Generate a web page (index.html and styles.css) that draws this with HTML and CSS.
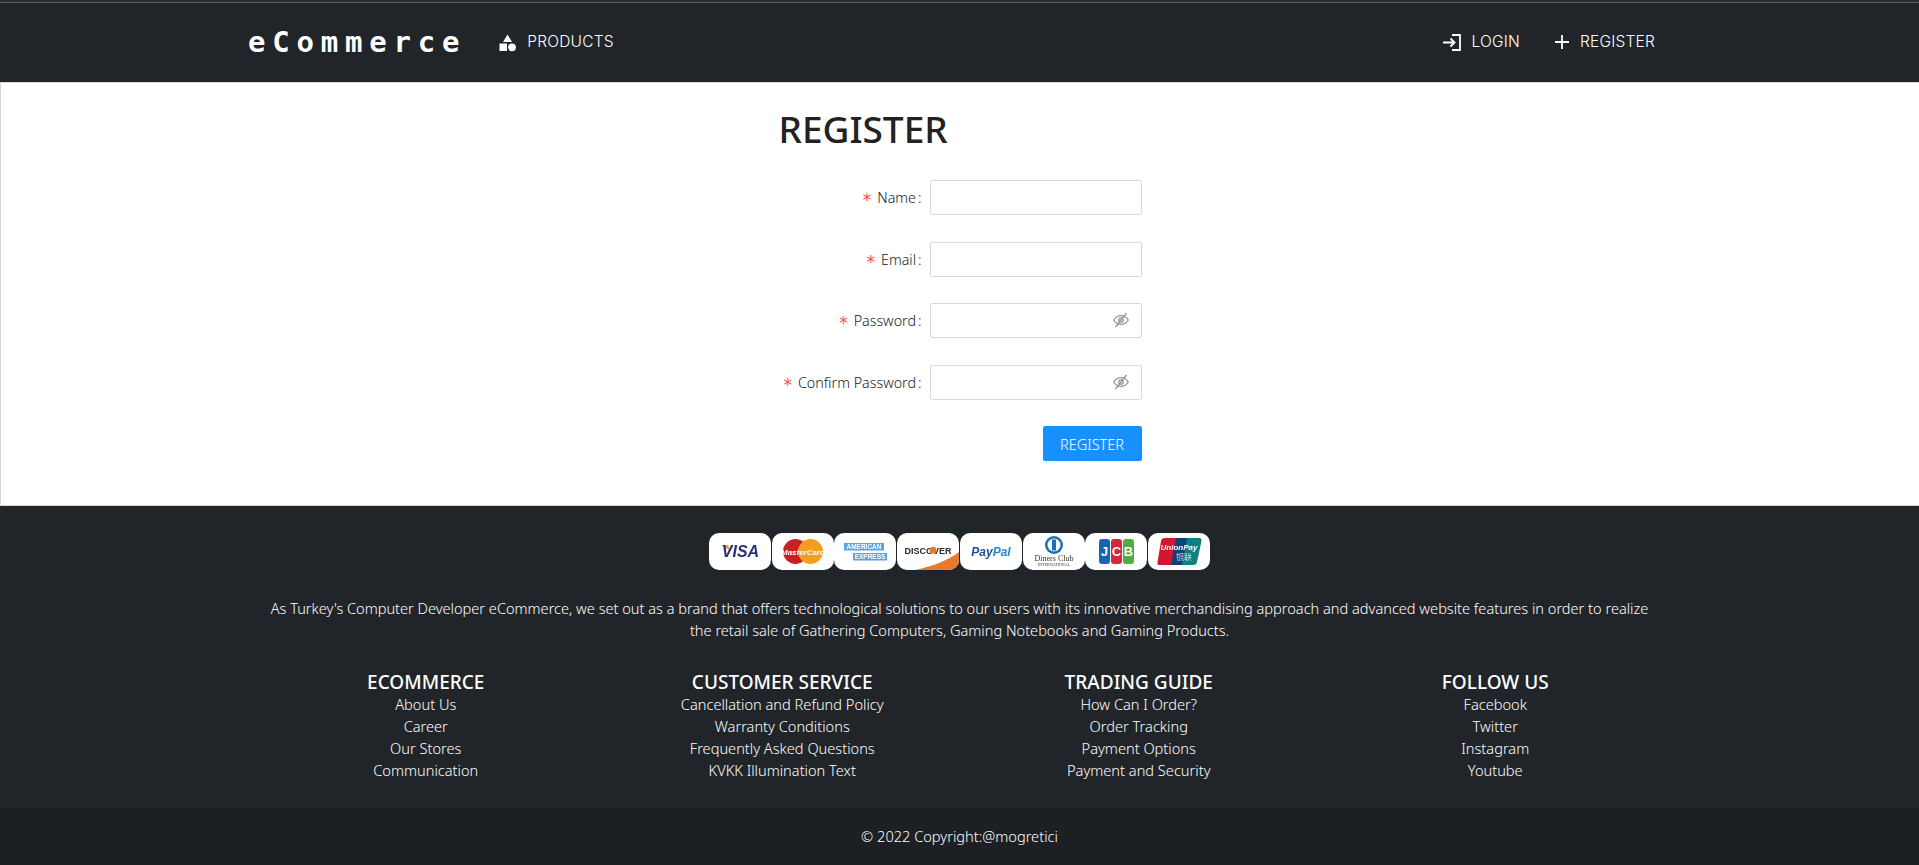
FILE: index.html
```html
<!DOCTYPE html>
<html lang="en">
  <head>
    <meta charset="UTF-8" />
    <title>eCommerce Register</title>
    <link rel="stylesheet" href="styles.css">
  </head>
  <body>
    <nav class="navbar">
      <a class="brand" href="#">eCommerce</a>
      <a class="nav-link" href="#">
        <svg class="nav-icon" width="19" height="19" viewBox="0 0 19 19"><path d="M9.500 1.500 14 9H5z" fill="#fff"/><rect x="1.500" y="10.500" width="7.500" height="7.500" fill="#fff"/><circle cx="14" cy="14.300" r="3.900" fill="#fff"/></svg>
        PRODUCTS
      </a>
      <div class="nav-right">
        <a class="nav-link" href="#">
          <svg class="nav-icon" width="20" height="19" viewBox="0 0 20 19" fill="none" stroke="#fff" stroke-width="1.800"><path d="M1 9.500h11M8.500 5.500l4 4-4 4"/><path d="M10 2h8v15h-8"/></svg>
          LOGIN
        </a>
        <a class="nav-link" href="#">
          <svg class="nav-icon plus" width="14" height="14" viewBox="0 0 14 14" fill="none" stroke="#fff" stroke-width="1.800"><path d="M7 0v14M0 7h14"/></svg>
          REGISTER
        </a>
      </div>
    </nav>

    <main class="register-page">
      <div class="register-box">
        <h1>REGISTER</h1>
        <form class="register-form">
          <label class="req">Name<span class="colon">:</span></label>
          <div class="field"><input type="text" /></div>
          <label class="req">Email<span class="colon">:</span></label>
          <div class="field"><input type="email" /></div>
          <label class="req">Password<span class="colon">:</span></label>
          <div class="field">
            <input type="password" />
            <svg class="eye" width="16" height="16" viewBox="0 0 16 16" fill="none" stroke="#959595" stroke-width="1.300"><path d="M.7 8C2.500 5 5 3.600 8 3.600S13.500 5 15.300 8C13.500 11 11 12.400 8 12.400S2.500 11 .7 8z"/><circle cx="8" cy="8" r="2.200"/><path d="M13.500 1 2.500 15"/></svg>
          </div>
          <label class="req">Confirm Password<span class="colon">:</span></label>
          <div class="field">
            <input type="password" />
            <svg class="eye" width="16" height="16" viewBox="0 0 16 16" fill="none" stroke="#959595" stroke-width="1.300"><path d="M.7 8C2.500 5 5 3.600 8 3.600S13.500 5 15.300 8C13.500 11 11 12.400 8 12.400S2.500 11 .7 8z"/><circle cx="8" cy="8" r="2.200"/><path d="M13.500 1 2.500 15"/></svg>
          </div>
          <div class="actions"><button type="button">REGISTER</button></div>
        </form>
      </div>
    </main>

    <footer class="footer">
      <div class="cards">
        <!-- visa -->
        <svg class="card" viewBox="0 0 62 37"><path d="M12 12h7l2.500 6z" fill="#e8a33d"/><text x="31.500" y="24" class="c-visa">VISA</text></svg>
        <!-- mastercard -->
        <svg class="card" viewBox="0 0 62 37"><circle cx="23.500" cy="18.500" r="12.500" fill="#cc1f24"/><circle cx="38.500" cy="18.500" r="12.500" fill="#f59d1f"/><text x="31" y="21.500" class="c-mc">MasterCard</text></svg>
        <!-- amex -->
        <svg class="card" viewBox="0 0 62 37"><rect x="10" y="10" width="40" height="7.500" fill="#57a4e6"/><rect x="19" y="20" width="34" height="7.500" fill="#57a4e6"/><text x="30" y="16.300" class="c-amex">AMERICAN</text><text x="36" y="26.300" class="c-amex">EXPRESS</text></svg>
        <!-- discover -->
        <svg class="card" viewBox="0 0 62 37"><path d="M18 37C36 33 50 28 62 19V29Q62 37 54 37z" fill="#e87a2e"/><text x="31" y="20.500" class="c-disc">DISCOVER</text><circle cx="36" cy="17.200" r="3.500" fill="#e87a2e"/></svg>
        <!-- paypal -->
        <svg class="card" viewBox="0 0 62 37"><text x="31" y="22.500" class="c-pp"><tspan fill="#1f4f92">Pay</tspan><tspan fill="#2a8ad0">Pal</tspan></text></svg>
        <!-- diners -->
        <svg class="card" viewBox="0 0 62 37"><circle cx="31" cy="12" r="9" fill="#1d6fb3"/><circle cx="31" cy="12" r="6.500" fill="#fff"/><rect x="29" y="6.500" width="4" height="11" fill="#1d6fb3"/><text x="31" y="28" class="c-din">Diners Club</text><text x="31" y="33" class="c-din2">INTERNATIONAL</text></svg>
        <!-- jcb -->
        <svg class="card" viewBox="0 0 62 37"><rect x="14" y="6" width="11" height="25" rx="3" fill="#1565b5"/><rect x="26" y="6" width="11" height="25" rx="3" fill="#d8263c"/><rect x="38" y="6" width="11" height="25" rx="3" fill="#4fae3d"/><text x="19.500" y="23" class="c-jcb">J</text><text x="31.500" y="23" class="c-jcb">C</text><text x="43.500" y="23" class="c-jcb">B</text></svg>
        <!-- unionpay -->
        <svg class="card" viewBox="0 0 62 37"><path d="M17 5h14l-5 27H11q-2 0-1.600-2L13 8q.6-3 4-3z" fill="#d2172f"/><path d="M28 5h14l-5 27H23z" fill="#123f7a"/><path d="M39 5h12q3 0 2.500 3L49 29q-.5 3-4 3H34z" fill="#0f7f84"/><text x="31" y="17" class="c-up">UnionPay</text><text x="36" y="27" class="c-up2">银联</text></svg>
      </div>

      <p class="about">
        As Turkey's Computer Developer eCommerce, we set out as a brand that offers technological solutions to our users with its innovative merchandising approach and advanced website features in order to realize the retail sale of Gathering Computers, Gaming Notebooks and Gaming Products.
      </p>

      <div class="footer-cols">
        <div class="footer-col">
          <h5>ECOMMERCE</h5>
          <a href="#">About Us</a>
          <a href="#">Career</a>
          <a href="#">Our Stores</a>
          <a href="#">Communication</a>
        </div>
        <div class="footer-col">
          <h5>CUSTOMER SERVICE</h5>
          <a href="#">Cancellation and Refund Policy</a>
          <a href="#">Warranty Conditions</a>
          <a href="#">Frequently Asked Questions</a>
          <a href="#">KVKK Illumination Text</a>
        </div>
        <div class="footer-col">
          <h5>TRADING GUIDE</h5>
          <a href="#">How Can I Order?</a>
          <a href="#">Order Tracking</a>
          <a href="#">Payment Options</a>
          <a href="#">Payment and Security</a>
        </div>
        <div class="footer-col">
          <h5>FOLLOW US</h5>
          <a href="#">Facebook</a>
          <a href="#">Twitter</a>
          <a href="#">Instagram</a>
          <a href="#">Youtube</a>
        </div>
      </div>

      <div class="copyright">© 2022 Copyright:@mogretici</div>
    </footer>
  </body>
</html>
```

FILE: styles.css
```css
* {
  box-sizing: border-box;
}
body {
  margin: 0;
  font-family: "Noto Sans", "Open Sans", sans-serif;
  font-weight: 300;
  background-color: #fff;
  color: #222;
}
a {
  color: inherit;
  text-decoration: none;
}

/* top bar */
.navbar {
  height: 83px;
  display: flex;
  align-items: center;
  padding: 3px 264px 1px 248px;
  background: linear-gradient(#2a2d31 2px, #5a5c5f 2px, #5a5c5f 3px, #212529 3px);
  border-bottom: 1px solid #d8d8d8;
  color: #fff;
}
.brand {
  font-family: "DejaVu Sans Mono", monospace;
  font-weight: 700;
  font-size: 29px;
  letter-spacing: 6.800px;
  margin-right: 32px;
}
.nav-link {
  display: flex;
  align-items: center;
  gap: 10px;
  font-family: "Inter", Arial, sans-serif;
  font-weight: 300;
  font-size: 15.500px;
  letter-spacing: 0.200px;
  line-height: 20px;
}
.nav-right {
  margin-left: auto;
  display: flex;
  gap: 35px;
}
.plus {
  margin-right: 1px;
}

/* register form */
.register-page {
  height: 423px;
  padding-top: 20px;
  display: flex;
  justify-content: center;
  border-left: 1px solid #d8d8d8;
  border-bottom: 1px solid #d8d8d8;
}
.register-box {
  width: 363px;
}
.register-box h1 {
  margin: 0 0 25px;
  font-size: 37px;
  line-height: 52px;
  font-weight: 500;
  color: #222;
}
.register-form {
  display: grid;
  grid-template-columns: 151px 212px;
  grid-auto-rows: 35px;
  row-gap: 26.500px;
  align-items: center;
}
.register-form label {
  font-size: 14.300px;
  text-align: right;
  white-space: nowrap;
}
.req::before {
  content: "*";
  margin-right: 6px;
  color: #ff4d4f;
  font-family: "DejaVu Sans", sans-serif;
  font-weight: 400;
  font-size: 17px;
  line-height: 0;
  vertical-align: -3px;
}
.colon {
  margin: 0 8px 0 2px;
}
.field {
  position: relative;
  height: 35px;
}
.field input {
  display: block;
  width: 100%;
  height: 100%;
  border: 1px solid #d9d9d9;
  border-radius: 2px;
  background-color: #fff;
}
.eye {
  position: absolute;
  right: 13px;
  top: 9px;
}
.actions {
  grid-column: 2;
  display: flex;
  justify-content: flex-end;
}
.actions button {
  width: 99px;
  height: 35px;
  border: none;
  border-radius: 2px;
  background-color: #1890ff;
  color: #fff;
  font-family: inherit;
  font-weight: 300;
  font-size: 14.500px;
  box-shadow: 0 2px 0 rgba(0, 0, 0, 0.04);
}

/* footer */
.footer {
  background-color: #212529;
  color: #fff;
  text-align: center;
  height: 359px;
  padding-top: 27px;
}
.cards {
  display: flex;
  justify-content: center;
  gap: 0.700px;
}
.card {
  width: 62px;
  height: 37px;
  background-color: #fff;
  border-radius: 10px;
  filter: blur(0.300px);
}
.card text {
  text-anchor: middle;
  font-family: "Liberation Sans", Arial, sans-serif;
}
.c-visa {
  font-size: 16px;
  font-weight: 700;
  font-style: italic;
  fill: #26337a;
}
.c-mc {
  font-size: 8px;
  font-weight: 700;
  font-style: italic;
  fill: #fff;
}
.c-amex {
  font-size: 6.500px;
  font-weight: 700;
  fill: #fff;
}
.c-disc {
  font-size: 9px;
  font-weight: 700;
  fill: #2b2b2b;
}
.c-pp {
  font-size: 12px;
  font-weight: 700;
  font-style: italic;
}
.card .c-din {
  font-family: "Liberation Serif", serif;
  font-size: 8px;
  fill: #333;
}
.card .c-din2 {
  font-family: "Liberation Serif", serif;
  font-size: 4px;
  fill: #333;
}
.c-jcb {
  font-size: 13px;
  font-weight: 700;
  fill: #fff;
}
.c-up {
  font-size: 8px;
  font-weight: 700;
  font-style: italic;
  fill: #fff;
}
.card .c-up2 {
  font-family: "Noto Sans CJK SC", sans-serif;
  font-size: 8px;
  fill: #fff;
}
.about {
  width: 1400px;
  margin: 27px auto 0;
  font-size: 14.570px;
  line-height: 22px;
}
.footer-cols {
  width: 1428px;
  padding-left: 2px;
  margin: 30px auto 0;
  display: grid;
  grid-template-columns: repeat(4, 1fr);
}
.footer-col h5 {
  margin: 0;
  font-size: 19px;
  line-height: 22px;
  font-weight: 500;
}
.footer-col a {
  display: block;
  font-size: 14.600px;
  line-height: 22px;
}
.copyright {
  margin-top: 27px;
  height: 57px;
  line-height: 57px;
  font-size: 14.600px;
  background-color: #1c1f23;
}
```
